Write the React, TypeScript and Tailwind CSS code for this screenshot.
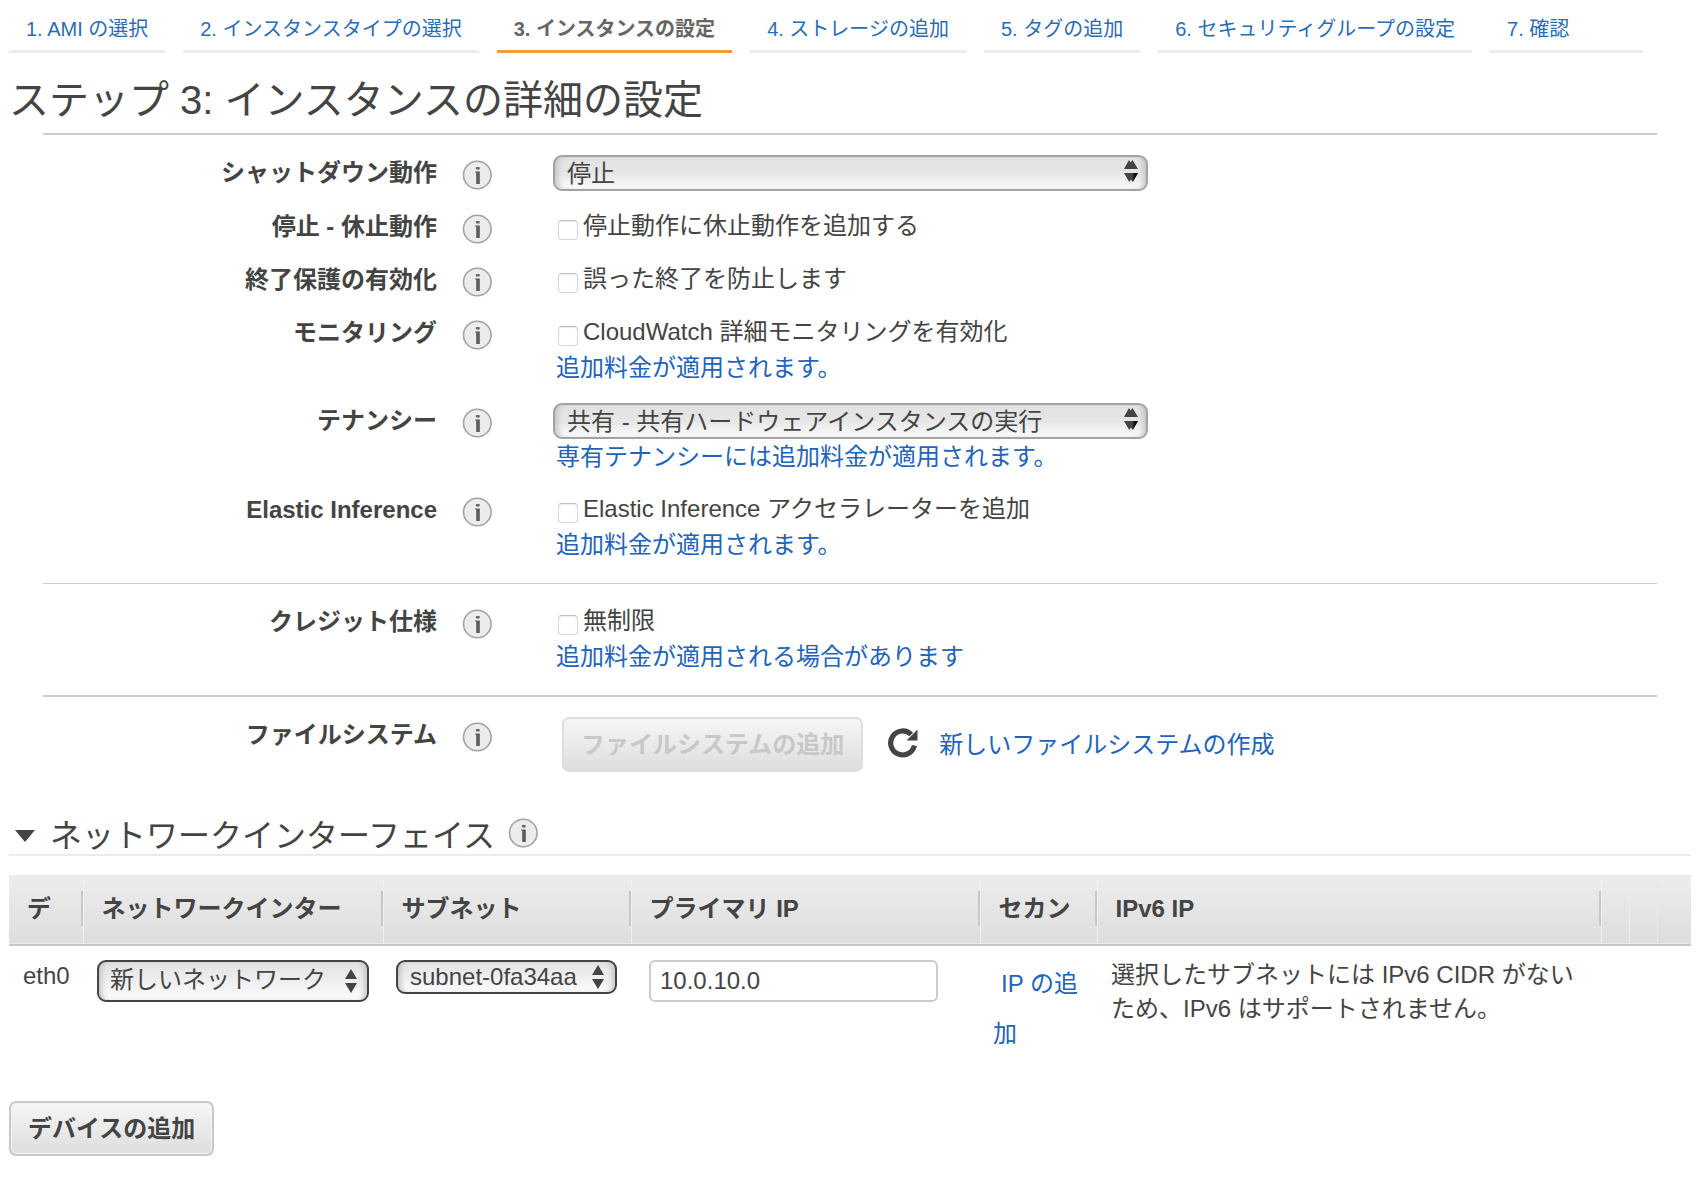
import type { ReactNode } from "react";
import clsx from "clsx";

const steps = [
  "1. AMI の選択",
  "2. インスタンスタイプの選択",
  "3. インスタンスの設定",
  "4. ストレージの追加",
  "5. タグの追加",
  "6. セキュリティグループの設定",
  "7. 確認",
];

const headers = ["デ", "ネットワークインター", "サブネット", "プライマリ IP", "セカン", "IPv6 IP"];

function InfoIcon() {
  return (
    <svg viewBox="0 0 30 30" className="block size-[30px]" aria-hidden="true">
      <circle cx="15.3" cy="15" r="13.8" fill="#ececec" stroke="#a3a3a3" strokeWidth="1.6" />
      <rect x="13.8" y="7" width="4" height="2.6" rx="1" fill="#666" />
      <path d="M13 11.5h4.8V24h-3.6V12.600H13z" fill="#5c5c5c" />
    </svg>
  );
}

function InfoButton({ label }: { label: string }) {
  return (
    <button type="button" aria-label={`${label}の詳細`} className="block shrink-0">
      <InfoIcon />
    </button>
  );
}

// the wide selects draw each arrow twice, slightly shifted
function WideArrows() {
  return (
    <svg viewBox="0 0 14 22" className="pointer-events-none absolute top-[5px] right-[10px] h-[22px] w-[14px]">
      <path d="M0 9 5 0l1.7 2.6L8.5 0 14 9z" fill="#444" />
      <path d="M0 13h14L8.7 22 7 19.4 5.3 22z" fill="#444" />
      <path d="M9.5 13H14L8.7 22z" fill="#111" />
    </svg>
  );
}

function Arrows() {
  return (
    <svg viewBox="0 0 12 24" className="pointer-events-none h-6 w-3">
      <path d="M0 10 6 0l6 10z" fill="#444" />
      <path d="M0 14h12L6 24z" fill="#444" />
    </svg>
  );
}

function WideSelect({ id, value }: { id: string; value: string }) {
  return (
    <div className="relative w-[595px]">
      <select
        id={id}
        className="block h-9 w-full appearance-none rounded-[9px] border-2 border-[#a3a3a3] bg-linear-to-b from-[#e2e2e2] via-[#e6e6e6] to-[#fcfcfc] pt-px pl-3 leading-8 shadow-[inset_6px_0_6px_-4px_#bbb,inset_-6px_0_6px_-4px_#bbb]"
      >
        <option>{value}</option>
      </select>
      <WideArrows />
    </div>
  );
}

function Check({ id, children }: { id: string; children: ReactNode }) {
  return (
    <div className="flex items-start gap-[5px] pl-[5px]">
      <input
        id={id}
        type="checkbox"
        className="mt-[11px] size-5 shrink-0 appearance-none rounded-[4px] border border-[#d6d6d6] border-t-[#bdbdbd] bg-white shadow-[inset_0_1px_1px_#eee]"
      />
      <label htmlFor={id} className="pb-px leading-[34px]">
        {children}
      </label>
    </div>
  );
}

function TextLink({ children }: { children: ReactNode }) {
  return (
    <a href="#" className="block pl-[3px] text-[#2264b9]">
      {children}
    </a>
  );
}

function Row({ id, label, children }: { id: string; label: string; children: ReactNode }) {
  return (
    <div className="flex items-start py-[9px]">
      <label htmlFor={id} className="w-[394px] text-right font-bold">
        {label}
      </label>
      <div className="mt-[5px] ml-[25px] w-[91px]">
        <InfoButton label={label} />
      </div>
      <div className="flex-1">{children}</div>
    </div>
  );
}

export default function App() {
  return (
    <main
      lang="ja"
      className="bg-white px-[9px] pb-5 font-['Liberation_Sans','Noto_Sans_CJK_JP',sans-serif] text-[24px] leading-[35px] text-[#444]"
    >
      <nav className="flex gap-[18px] text-[20px]">
        {steps.map((step, i) => (
          <a
            key={step}
            href="#"
            className={clsx(
              "border-b-3 px-[17px] pt-3 pb-[3px] whitespace-nowrap last:min-w-[153px]",
              i === 2 ? "border-[#f59b38] font-bold text-[#666]" : "border-[#ebebeb] text-[#2b6cb3]"
            )}
          >
            {step}
          </a>
        ))}
      </nav>

      <h1 className="pt-[17px] pb-[3px] text-[40px] leading-[60px]">ステップ 3: インスタンスの詳細の設定</h1>

      <form className="px-[34px]">
        <section className="border-t-2 border-[#ccc] pt-[11px] pb-3">
          <Row id="shutdown" label="シャットダウン動作">
            <WideSelect id="shutdown" value="停止" />
          </Row>
          <Row id="hibernate" label="停止 - 休止動作">
            <Check id="hibernate">停止動作に休止動作を追加する</Check>
          </Row>
          <Row id="termination" label="終了保護の有効化">
            <Check id="termination">誤った終了を防止します</Check>
          </Row>
          <Row id="monitoring" label="モニタリング">
            <Check id="monitoring">CloudWatch 詳細モニタリングを有効化</Check>
            <TextLink>追加料金が適用されます。</TextLink>
          </Row>
          <Row id="tenancy" label="テナンシー">
            <WideSelect id="tenancy" value="共有 - 共有ハードウェアインスタンスの実行" />
            <TextLink>専有テナンシーには追加料金が適用されます。</TextLink>
          </Row>
          <Row id="inference" label="Elastic Inference">
            <Check id="inference">Elastic Inference アクセラレーターを追加</Check>
            <TextLink>追加料金が適用されます。</TextLink>
          </Row>
        </section>
        <section className="border-t border-[#ccc] pt-[11px] pb-3">
          <Row id="credit" label="クレジット仕様">
            <Check id="credit">無制限</Check>
            <TextLink>追加料金が適用される場合があります</TextLink>
          </Row>
        </section>
        <section className="border-t-2 border-[#ccc] pt-[11px]">
          <Row id="filesystem" label="ファイルシステム">
            <div className="flex items-center pl-[9px]">
              <button
                id="filesystem"
                type="button"
                disabled
                className="h-[55px] rounded-[7px] border-2 border-[#dedede] bg-linear-to-b from-[#f6f6f6] to-[#dedede] px-[17px] font-bold text-[#c8c8c8]"
              >
                ファイルシステムの追加
              </button>
              <button type="button" aria-label="更新" className="mr-[21px] mb-1 ml-[25px]">
                <svg viewBox="0 0 30 30" className="block size-[30px]">
                  <path d="M26.400 17.500A12 12 0 1 1 23.200 6.500" fill="none" stroke="#444" strokeWidth="5.2" />
                  <path d="M29.500 1.500v11h-11z" fill="#444" />
                </svg>
              </button>
              <a href="#" className="text-[#2264b9]">
                新しいファイルシステムの作成
              </a>
            </div>
          </Row>
        </section>
      </form>

      <div className="mt-[37px] flex items-start border-b-2 border-[#ebebeb] pl-[6px]">
        <svg viewBox="0 0 20 12" className="h-3 w-5 self-center">
          <path d="M0 0h20L10 12z" fill="#444" />
        </svg>
        <h2 className="mr-[13px] ml-[15px] text-[32px] leading-[36px]">ネットワークインターフェイス</h2>
        <InfoButton label="ネットワークインターフェイス" />
      </div>

      <table className="mt-[19px] w-full table-fixed border-collapse text-left">
        <colgroup>
          <col className="w-[74px]" />
          <col className="w-[300px]" />
          <col className="w-[248px]" />
          <col className="w-[349px]" />
          <col className="w-[117px]" />
          <col className="w-[504px]" />
          <col className="w-[28px]" />
          <col className="w-[28px]" />
          <col />
        </colgroup>
        <thead>
          <tr className="h-[70px] border-b-2 border-[#c8c8c8] bg-linear-to-b from-[#ededed] to-[#dedede]">
            {headers.map((header) => (
              <th key={header} scope="col" className="border-r border-r-[#f1f1f1] p-0 pb-[3px]">
                <div className="border-r-2 border-[#c8c8c8] pl-[18px] whitespace-nowrap shadow-[1px_0_0_#fff]">
                  {header}
                </div>
              </th>
            ))}
            <td className="border-r border-r-[#ececec]" />
            <td className="border-r border-r-[#e8e8e8]" />
            <td />
          </tr>
        </thead>
        <tbody>
          <tr className="align-top">
            <td className="pt-3 pl-[14px]">eth0</td>
            <td className="pt-[14px] pl-[14px]">
              <div className="relative w-[272px]">
                <select
                  aria-label="ネットワークインターフェイス"
                  className="block h-[42px] w-full appearance-none rounded-[9px] border-2 border-[#444] bg-linear-to-b from-[#e2e2e2] to-[#fcfcfc] pb-[2px] pl-[11px] leading-[34px] shadow-[inset_6px_0_6px_-4px_#bbb,inset_-6px_0_6px_-4px_#bbb]"
                >
                  <option>新しいネットワーク</option>
                </select>
                <div className="pointer-events-none absolute inset-y-0 right-3 flex items-center">
                  <Arrows />
                </div>
              </div>
            </td>
            <td className="pt-[14px] pl-[13px]">
              <div className="relative w-[221px]">
                <select
                  aria-label="サブネット"
                  className="block h-[34px] w-full appearance-none rounded-[9px] border-2 border-[#444] bg-linear-to-b from-[#e2e2e2] to-[#fcfcfc] pl-3 leading-[28px] shadow-[inset_6px_0_6px_-4px_#bbb,inset_-6px_0_6px_-4px_#bbb]"
                >
                  <option>subnet-0fa34aa</option>
                </select>
                <div className="pointer-events-none absolute inset-y-0 right-[13px] flex items-center">
                  <Arrows />
                </div>
              </div>
            </td>
            <td className="pt-[14px] pl-[18px]">
              <input
                type="text"
                aria-label="プライマリ IP"
                defaultValue="10.0.10.0"
                className="block h-[42px] w-[289px] rounded-[6px] border-2 border-[#ccc] bg-white px-[9px]"
              />
            </td>
            <td className="px-[13px] pt-[13px] indent-[8px] leading-[50px]">
              <a href="#" className="text-[#2264b9]">
                IP の追加
              </a>
            </td>
            <td className="pt-3 pr-3 pl-[14px] leading-[34px]">
              選択したサブネットには IPv6 CIDR がないため、IPv6 はサポートされません。
            </td>
            <td colSpan={3} />
          </tr>
        </tbody>
      </table>

      <button
        type="button"
        className="mt-[42px] h-[55px] rounded-[7px] border-2 border-[#c8c8c8] bg-linear-to-b from-[#f6f6f6] to-[#dedede] px-[17px] pb-px font-bold shadow-[inset_0_0_0_1px_#f4f4f4]"
      >
        デバイスの追加
      </button>
    </main>
  );
}
